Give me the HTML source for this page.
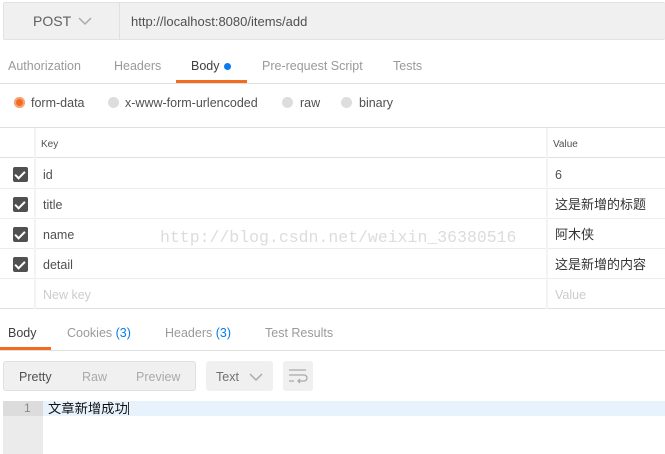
<!DOCTYPE html><html><head><style>
*{margin:0;padding:0;box-sizing:border-box}
body{width:665px;height:454px;overflow:hidden;background:#fff;font-family:"Liberation Sans","Noto Sans CJK SC",sans-serif;font-size:12.5px;color:#505050;position:relative;line-height:15px}
.a{position:absolute;white-space:nowrap}
.cb{position:absolute;left:13px;width:15px;height:15px;background:#505050;border-radius:2px}
.cb:after{content:"";position:absolute;left:4px;top:2px;width:4px;height:8px;border:solid #fff;border-width:0 2px 2px 0;transform:rotate(45deg)}
.row{position:absolute;left:0;width:665px;height:30px;border-bottom:1px solid #ececec}
.rad{position:absolute;width:11px;height:11px;border-radius:50%;background:#ddd;top:97px}
.cj{font-size:13px;color:#333;line-height:15px;height:15px}
</style></head><body>
<div class="a" style="left:3px;top:2px;width:662px;height:38px;background:#f0f0f0;border:1px solid #e2e2e2;border-right:none;border-radius:2px"></div>
<div class="a" style="left:119px;top:2px;width:1px;height:38px;background:#e0e0e0"></div>
<div class="a" style="left:33px;top:14px;font-size:14px;color:#606060">POST</div>
<svg class="a" style="left:78px;top:17px" width="14" height="9"><path d="M1 1L7 7L13 1" stroke="#aaa" stroke-width="1.5" fill="none"/></svg>
<div class="a" style="left:131px;top:14px;font-size:13px;color:#505050">http://localhost:8080/items/add</div>
<div class="a" style="left:0;top:83px;width:665px;height:1px;background:#e0e0e0"></div>
<div class="a" style="left:8px;top:59px;color:#9a9a9a">Authorization</div>
<div class="a" style="left:114px;top:59px;color:#9a9a9a">Headers</div>
<div class="a" style="left:191px;top:59px;color:#404040">Body</div>
<div class="a" style="left:224px;top:63px;width:7px;height:7px;border-radius:50%;background:#097bed"></div>
<div class="a" style="left:176px;top:80px;width:71px;height:3px;background:#f26b21"></div>
<div class="a" style="left:262px;top:59px;color:#9a9a9a">Pre-request Script</div>
<div class="a" style="left:393px;top:59px;color:#9a9a9a">Tests</div>
<div class="rad" style="left:14px;background:#f26b21;box-shadow:inset 0 0 0 2px #f7a47a"></div>
<div class="a" style="left:31px;top:96px">form-data</div>
<div class="rad" style="left:108px"></div><div class="a" style="left:125px;top:96px">x-www-form-urlencoded</div>
<div class="rad" style="left:282px"></div><div class="a" style="left:300px;top:96px">raw</div>
<div class="rad" style="left:341px"></div><div class="a" style="left:359px;top:96px">binary</div>
<div class="a" style="left:0;top:127px;width:665px;height:1px;background:#e0e0e0"></div>
<div class="row" style="top:128px;border-bottom:1px solid #e0e0e0"></div>
<div class="a" style="left:41px;top:137px;font-size:10px;color:#505050">Key</div>
<div class="a" style="left:553px;top:137px;font-size:10px;color:#505050">Value</div>
<div class="row" style="top:159px"></div><div class="cb" style="top:167px"></div>
<div class="a" style="left:43px;top:168px">id</div><div class="a" style="left:555px;top:168px">6</div>
<div class="row" style="top:189px"></div><div class="cb" style="top:197px"></div>
<div class="a" style="left:43px;top:198px">title</div><div class="a cj" style="left:555px;top:197px">这是新增的标题</div>
<div class="row" style="top:219px"></div><div class="cb" style="top:227px"></div>
<div class="a" style="left:43px;top:228px">name</div><div class="a cj" style="left:555px;top:227px">阿木侠</div>
<div class="row" style="top:249px"></div><div class="cb" style="top:257px"></div>
<div class="a" style="left:43px;top:258px">detail</div><div class="a cj" style="left:555px;top:257px">这是新增的内容</div>
<div class="row" style="top:279px;border-bottom:1px solid #e0e0e0"></div>
<div class="a" style="left:43px;top:288px;color:#ccc">New key</div><div class="a" style="left:555px;top:288px;color:#ccc">Value</div>
<div class="a" style="left:34px;top:128px;width:2px;height:181px;background:#f3f3f3"></div>
<div class="a" style="left:546px;top:128px;width:2px;height:181px;background:#f3f3f3"></div>
<div class="a" style="left:160px;top:228px;font-family:'Liberation Mono',monospace;font-size:16.5px;line-height:20px;color:#dcdcdc">http://blog.csdn.net/weixin_36380516</div>
<div class="a" style="left:8px;top:326px;color:#404040">Body</div>
<div class="a" style="left:67px;top:326px;color:#9a9a9a">Cookies <span style="color:#097bed">(3)</span></div>
<div class="a" style="left:165px;top:326px;color:#9a9a9a">Headers <span style="color:#097bed">(3)</span></div>
<div class="a" style="left:265px;top:326px;color:#9a9a9a">Test Results</div>
<div class="a" style="left:0;top:347px;width:51px;height:3px;background:#f26b21"></div>
<div class="a" style="left:0;top:350px;width:665px;height:1px;background:#e0e0e0"></div>
<div class="a" style="left:3px;top:361px;width:193px;height:30px;background:#f0f0f0;border:1px solid #e0e0e0;border-radius:3px"></div>
<div class="a" style="left:19px;top:370px;color:#505050">Pretty</div>
<div class="a" style="left:82px;top:370px;color:#aaa">Raw</div>
<div class="a" style="left:136px;top:370px;color:#aaa">Preview</div>
<div class="a" style="left:206px;top:361px;width:67px;height:30px;background:#f0f0f0;border-radius:3px"></div>
<div class="a" style="left:216px;top:370px;color:#707070">Text</div>
<svg class="a" style="left:249px;top:373px" width="14" height="9"><path d="M1 1L7 7L13 1" stroke="#aaa" stroke-width="1.5" fill="none"/></svg>
<div class="a" style="left:283px;top:361px;width:30px;height:30px;background:#f0f0f0;border-radius:3px"></div>
<svg class="a" style="left:288px;top:368px" width="20" height="16"><path d="M1 2H18M1 7H16a3 3 0 0 1 0 6H10M12 11l-2 2 2 2M1 13H6" stroke="#aaa" stroke-width="1.3" fill="none"/></svg>
<div class="a" style="left:3px;top:401px;width:662px;height:53px;border-top:1px solid #e0e0e0"></div>
<div class="a" style="left:3px;top:401px;width:40px;height:53px;background:#ebebeb"></div>
<div class="a" style="left:3px;top:401px;width:40px;height:15px;background:#dcdcdc"></div>
<div class="a" style="left:43px;top:401px;width:622px;height:15px;background:#e8f2fc"></div>
<div class="a" style="left:24px;top:401px;font-size:12px;color:#888">1</div>
<div class="a cj" style="left:48px;top:401px;font-size:13.3px;color:#111">文章新增成功</div>
<div class="a" style="left:128px;top:402px;width:1px;height:13px;background:#333"></div>
</body></html>
